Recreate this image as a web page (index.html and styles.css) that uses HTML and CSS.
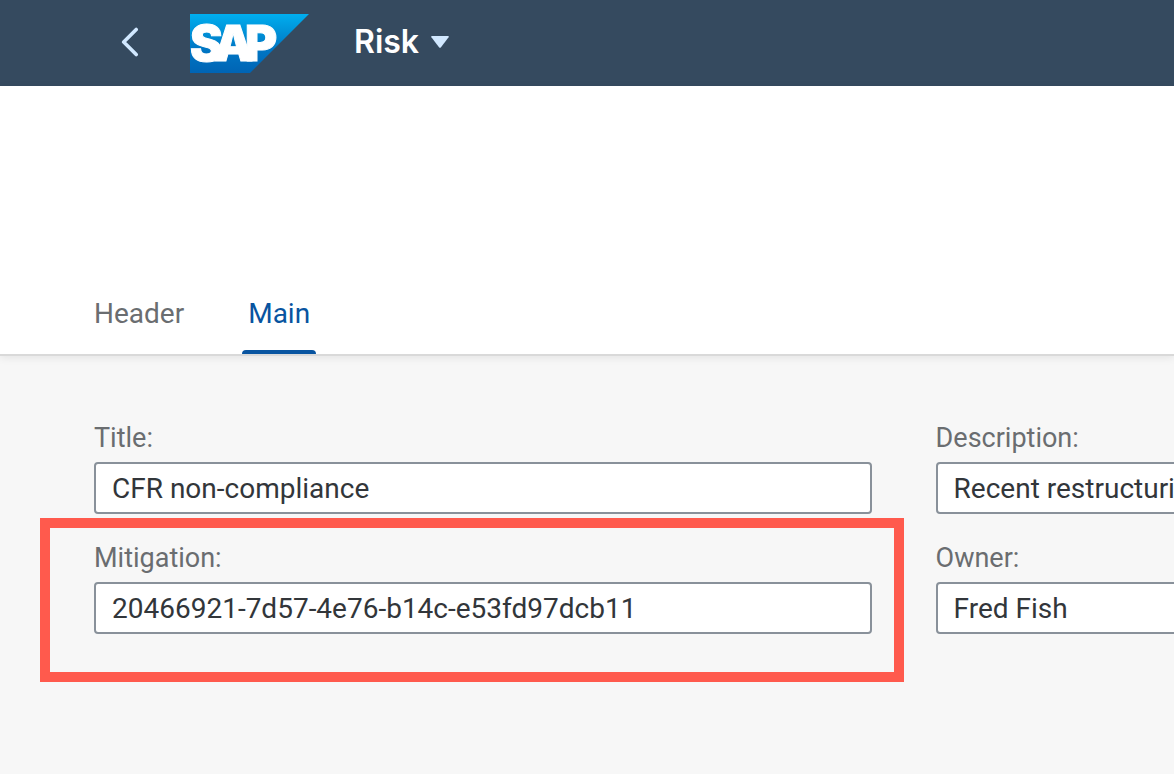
FILE: index.html
```html
<!DOCTYPE html>
<html lang="en">
<head>
<meta charset="utf-8">
<meta name="viewport" content="width=device-width, initial-scale=1">
<title>Risk</title>
<link rel="stylesheet" href="styles.css">
</head>
<body>
<header class="shell">
  <button class="back" type="button" aria-label="Back">
    <svg width="20" height="32" viewBox="0 0 20 32" aria-hidden="true"><path d="M16.200 2.500 3.700 15l12.500 12.500" fill="none" stroke="#d1e8ff" stroke-width="3.600" stroke-linecap="round" stroke-linejoin="round"/></svg>
  </button>
  <a class="logo" href="#" aria-label="SAP home">
    <svg width="119" height="59" viewBox="0 0 119 59" aria-hidden="true">
      <defs><linearGradient id="logo-fill" x1="0" y1="0" x2="0" y2="1"><stop offset="0" stop-color="#00aeef"/><stop offset=".25" stop-color="#0097dc"/><stop offset=".6" stop-color="#0076c4"/><stop offset="1" stop-color="#0064b4"/></linearGradient></defs>
      <path d="M0 0h119L60 59H0z" fill="url(#logo-fill)"/>
      <text class="logo-text" x="0 24 55" y="47">SAP</text>
    </svg>
  </a>
  <button class="app-title" type="button">
    <span>Risk</span>
    <svg width="18" height="12" viewBox="0 0 18 12" aria-hidden="true"><path d="M1 0h16q1.500 0 .6 1.200L10 11.300q-1 1-2 0L.4 1.200Q-.5 0 1 0z" fill="#d1e8ff"/></svg>
  </button>
</header>
<nav class="tabs" aria-label="Sections">
  <a class="tab" href="#header">Header</a>
  <a class="tab tab-active" href="#main" aria-current="true">Main</a>
</nav>
<main class="content" id="main">
  <form class="form">
    <div class="field">
      <label for="title">Title:</label>
      <input id="title" type="text" value="CFR non-compliance">
    </div>
    <div class="field">
      <label for="description">Description:</label>
      <input id="description" type="text" value="Recent restructuring">
    </div>
    <div class="field field-marked">
      <label for="mitigation">Mitigation:</label>
      <input id="mitigation" type="text" value="20466921-7d57-4e76-b14c-e53fd97dcb11">
    </div>
    <div class="field">
      <label for="owner">Owner:</label>
      <input id="owner" type="text" value="Fred Fish">
    </div>
  </form>
</main>
</body>
</html>
```
FILE: styles.css
```css
* {
  box-sizing: border-box;
}

body {
  margin: 0;
  min-height: 100vh;
  display: flex;
  flex-direction: column;
  background: #f7f7f7;
  color: #32363a;
  font-family: Roboto, "Liberation Sans", sans-serif;
  font-size: 28px;
}

button {
  padding: 0;
  border: 0;
  background: none;
  font: inherit;
}

svg {
  display: block;
}

.shell {
  display: flex;
  align-items: center;
  height: 86px;
  padding-left: 120px;
  background: #354a5f;
}

.back {
  margin-right: 50px;
}

.logo {
  margin-right: 45px;
}

.logo-text {
  fill: #fff;
  stroke: #fff;
  stroke-width: 1px;
  font-family: Inter, "Open Sans", sans-serif;
  font-size: 49px;
  font-weight: 900;
}

.app-title {
  display: flex;
  align-items: center;
  gap: 12px;
  padding-bottom: 2px;
  color: #fff;
  font-family: Inter, sans-serif;
  font-size: 32px;
  font-weight: 600;
  line-height: 40px;
}

.tabs {
  position: relative;
  display: flex;
  align-items: flex-end;
  gap: 52px;
  height: 270px;
  padding-left: 88px;
  background: #fff;
  border-bottom: 2px solid #d9d9d9;
  box-shadow: 0 2px 8px rgba(0, 0, 0, 0.08);
}

.tab {
  padding: 0 6px 18px;
  border-bottom: 4px solid transparent;
  color: #6a6d70;
  line-height: 36px;
  text-decoration: none;
}

.tab-active {
  position: relative;
  color: #0854a0;
}

.tab-active::after {
  content: "";
  position: absolute;
  inset: auto 0 -4px;
  height: 4px;
  border-radius: 4px 4px 0 0;
  background: #0854a0;
}

.content {
  flex: 1;
  padding: 62px 0 92px 94px;
  overflow: hidden;
}

.form {
  display: grid;
  grid-template-columns: 72% 72%;
  gap: 24px 64px;
}

.field {
  display: flex;
  flex-direction: column;
  gap: 6px;
}

.field label {
  padding-top: 2px;
  color: #6a6d70;
  font-size: 27px;
  line-height: 36px;
}

.field input {
  width: 100%;
  height: 52px;
  padding: 1px 16px 0;
  border: 2px solid #89919a;
  border-radius: 4px;
  background: #fff;
  color: #32363a;
  font: inherit;
}

.field-marked {
  position: relative;
}

.field-marked::after {
  content: "";
  position: absolute;
  inset: -20px -32px -48px -54px;
  border: 10px solid #ff5a4d;
  pointer-events: none;
}
```
